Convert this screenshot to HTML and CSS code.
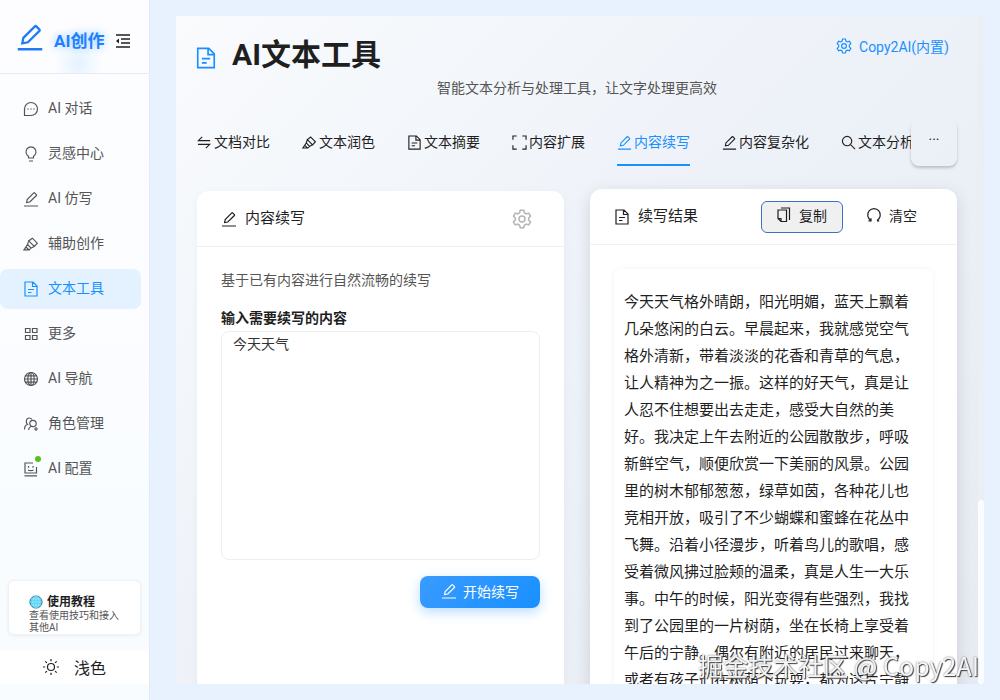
FILE: index.html
```html
<!DOCTYPE html>
<html lang="zh-CN">
<head>
    <meta charset="UTF-8">
    <meta name="viewport" content="width=device-width, initial-scale=1.0">
    <title>AI文本工具</title>
    <link rel="stylesheet" href="styles.css">
</head>
<body>
    <!-- Shared icons -->
    <svg class="sprite" aria-hidden="true">
        <symbol id="edit" viewBox="0 0 16 16"><path d="M1 15h14M3.6 11.6l.6-3.1 6.6-6.6a.6.6 0 0 1 .8 0l1.8 1.8a.6.6 0 0 1 0 .8L6.800 11z"/></symbol>
        <symbol id="file" viewBox="0 0 16 16"><path d="M2 1h8l4 4v10H2zM9.500 1v4.500H14M5 8.500h6M5 11.500h3.500"/></symbol>
        <symbol id="highlight" viewBox="0 0 16 16"><path d="M9.300 2.200l5 5-3 3.300-5.600-5.600zM5.700 4.900L4.500 8.500l3.600 3.600 3.200-1.600M4.500 8.500L1 13.800h5.200l1.900-1.700M3 11l3 3"/></symbol>
        <symbol id="gear" viewBox="0 0 16 16"><path d="M6.600 1h2.800l.5 2 1.500.9 2-.6 1.400 2.400L13.300 7.200v1.600l1.500 1.500-1.400 2.400-2-.6-1.500.9-.5 2H6.600l-.5-2-1.500-.9-2 .6-1.400-2.400 1.500-1.500V7.200L1.200 5.700l1.400-2.400 2 .6L6.100 3z"/><circle cx="8" cy="8" r="2.400"/></symbol>
    </svg>

    <div class="app">
        <aside class="sidebar">
            <div class="brand">
                <svg class="icon brand-logo"><use href="#edit"/></svg>
                <span class="brand-name">AI创作</span>
                <button class="fold-btn" aria-label="收起菜单">
                    <svg class="icon" viewBox="0 0 16 16"><path d="M1 2h14M6 6h9M6 10h9M1 14h14"/><path class="solid" d="M4 5.500v5L1 8z"/></svg>
                </button>
            </div>

            <nav class="menu">
                <a class="menu-item" href="#"><svg class="icon" viewBox="0 0 16 16"><path d="M1.500 14.500V8A6.500 6.500 0 1 1 8 14.500z"/><path d="M4.300 8h1.400M7.300 8h1.400M10.300 8h1.400"/></svg>AI 对话</a>
                <a class="menu-item" href="#"><svg class="icon" viewBox="0 0 16 16"><path d="M5.500 12V10.200a5 5 0 1 1 5 0V12zM6 15h4"/></svg>灵感中心</a>
                <a class="menu-item" href="#"><svg class="icon"><use href="#edit"/></svg>AI 仿写</a>
                <a class="menu-item" href="#"><svg class="icon"><use href="#highlight"/></svg>辅助创作</a>
                <a class="menu-item active" href="#"><svg class="icon"><use href="#file"/></svg>文本工具</a>
                <a class="menu-item" href="#"><svg class="icon" viewBox="0 0 16 16"><path d="M2.500 2.500h4.500v4h-4.500zM9.500 2.500h4.500v4h-4.500zM2.500 9.500h4.500v4h-4.500zM9.500 9.500h4.500v4h-4.500z"/></svg>更多</a>
                <a class="menu-item" href="#"><svg class="icon" viewBox="0 0 16 16"><circle cx="8" cy="8" r="6.500"/><ellipse cx="8" cy="8" rx="3.200" ry="6.500"/><path d="M8 1.500v13M1.500 8h13M2.500 4.800h11M2.500 11.200h11"/></svg>AI 导航</a>
                <a class="menu-item" href="#"><svg class="icon" viewBox="0 0 16 16"><path d="M1.500 13.500c0-3 1.200-4.500 3-5C2.500 6.500 3 2 6.200 2c1.500 0 2.300.7 2.800 1.500M5.500 14c.2-2 1-3 2.500-3.500M11 13h4M13 11v4"/><circle cx="10" cy="7.500" r="3.200"/></svg>角色管理</a>
                <a class="menu-item" href="#"><span class="icon-wrap"><svg class="icon" viewBox="0 0 16 16"><path d="M10 2H2v10h11.500V6M1.500 14.800h12.500M5.500 5v1.800M10 5v1.800M5 8.800c1 1.200 4.500 1.200 5.500 0"/></svg><i class="dot"></i></span>AI 配置</a>
            </nav>

            <a class="tutorial" href="#">
                <strong class="tutorial-title">
                    <svg class="globe" viewBox="0 0 16 16"><circle cx="8" cy="8" r="7"/><path d="M8 1v14M1 8h14M2.500 4.500h11M2.500 11.500h11"/><ellipse cx="8" cy="8" rx="3.500" ry="7"/></svg>使用教程
                </strong>
                <span class="tutorial-text">查看使用技巧和接入其他AI</span>
            </a>
            <button class="theme-btn">
                <svg class="icon" viewBox="0 0 16 16"><circle cx="8" cy="8" r="3.500"/><path d="M8 0v2.200M8 13.800V16M0 8h2.200M13.800 8H16M2.300 2.300l1.600 1.600M12.100 12.100l1.600 1.600M2.300 13.700l1.600-1.600M12.100 3.900l1.600-1.600"/></svg>浅色
            </button>
        </aside>

        <main class="main">
            <div class="panel">
                <header class="page-header">
                    <svg class="icon title-icon"><use href="#file"/></svg>
                    <h1>AI文本工具</h1>
                    <a class="model-link" href="#"><svg class="icon"><use href="#gear"/></svg>Copy2AI(内置)</a>
                </header>
                <p class="subtitle">智能文本分析与处理工具，让文字处理更高效</p>

                <div class="tabs">
                    <div class="tab-list" role="tablist">
                        <button class="tab" role="tab"><svg class="icon" viewBox="0 0 16 16"><path d="M14 6H1.500L5.500 2M1 10h12.500l-4 4"/></svg>文档对比</button>
                        <button class="tab" role="tab"><svg class="icon"><use href="#highlight"/></svg>文本润色</button>
                        <button class="tab" role="tab"><svg class="icon"><use href="#file"/></svg>文本摘要</button>
                        <button class="tab" role="tab"><svg class="icon" viewBox="0 0 16 16"><path d="M1 5V1h4M11 1h4v4M15 11v4h-4M5 15H1v-4"/></svg>内容扩展</button>
                        <button class="tab active" role="tab" aria-selected="true"><svg class="icon"><use href="#edit"/></svg>内容续写</button>
                        <button class="tab" role="tab"><svg class="icon"><use href="#edit"/></svg>内容复杂化</button>
                        <button class="tab" role="tab"><svg class="icon" viewBox="0 0 16 16"><circle cx="6.500" cy="6.500" r="5"/><path d="M10.200 10.200L15 15"/></svg>文本分析</button>
                    </div>
                    <button class="tab-more" aria-label="更多标签">···</button>
                </div>

                <div class="columns">
                    <section class="card">
                        <div class="card-header">
                            <svg class="icon"><use href="#edit"/></svg>
                            <h2>内容续写</h2>
                            <button class="settings-btn" aria-label="设置"><svg class="icon"><use href="#gear"/></svg></button>
                        </div>
                        <div class="card-body form-body">
                            <p class="desc">基于已有内容进行自然流畅的续写</p>
                            <label class="field-label" for="source">输入需要续写的内容</label>
                            <textarea class="source" id="source">今天天气</textarea>
                            <button class="primary-btn"><svg class="icon"><use href="#edit"/></svg>开始续写</button>
                        </div>
                    </section>

                    <section class="card raised">
                        <div class="card-header">
                            <svg class="icon"><use href="#file"/></svg>
                            <h2>续写结果</h2>
                            <div class="actions">
                                <button class="action-btn focused"><svg class="icon" viewBox="0 0 16 16"><path d="M2 3h8.500v11.500H5L2 11.500zM5 14.500v-3H2M5 1h8.500v12"/></svg>复制</button>
                                <button class="action-btn"><svg class="icon" viewBox="0 0 16 16"><path d="M5 13.500a6.300 6.300 0 1 1 6 0M2.500 13.800H5v-2.500M13.200 13.800H11"/></svg>清空</button>
                            </div>
                        </div>
                        <div class="card-body">
                            <div class="result">今天天气格外晴朗，阳光明媚，蓝天上飘着几朵悠闲的白云。早晨起来，我就感觉空气格外清新，带着淡淡的花香和青草的气息，让人精神为之一振。这样的好天气，真是让人忍不住想要出去走走，感受大自然的美好。我决定上午去附近的公园散散步，呼吸新鲜空气，顺便欣赏一下美丽的风景。公园里的树木郁郁葱葱，绿草如茵，各种花儿也竞相开放，吸引了不少蝴蝶和蜜蜂在花丛中飞舞。沿着小径漫步，听着鸟儿的歌唱，感受着微风拂过脸颊的温柔，真是人生一大乐事。中午的时候，阳光变得有些强烈，我找到了公园里的一片树荫，坐在长椅上享受着午后的宁静。偶尔有附近的居民过来聊天，或者有孩子们在树荫下玩耍，都为这片宁静</div>
                        </div>
                    </section>
                </div>
            </div>
            <div class="scroll-track"><div class="scroll-thumb"></div></div>
        </main>
    </div>
    <div class="watermark">掘金技术社区 @ Copy2AI</div>
</body>
</html>
```
FILE: styles.css
```css
* {
    margin: 0;
    padding: 0;
    box-sizing: border-box;
}

body {
    font-family: Roboto, "Noto Sans CJK SC", sans-serif;
    font-size: 14px;
    color: #1f1f1f;
    background: #e8f2fe;
}

button {
    font: inherit;
    color: inherit;
    background: none;
    border: none;
    cursor: pointer;
}

a {
    color: inherit;
    text-decoration: none;
}

.sprite {
    position: absolute;
    width: 0;
    height: 0;
}

.icon {
    width: 16px;
    height: 16px;
    flex-shrink: 0;
    fill: none;
    stroke: currentColor;
    stroke-width: 1.2;
}

.icon .solid {
    fill: currentColor;
    stroke: none;
}

.app {
    display: flex;
    height: 100vh;
    overflow: hidden;
}

/* Sidebar */
.sidebar {
    width: 150px;
    flex-shrink: 0;
    display: flex;
    flex-direction: column;
    padding-bottom: 16px;
    background: linear-gradient(180deg, #fdfdff, #f8fcff);
    border-right: 1px solid #e4ebf3;
}

.brand {
    display: flex;
    align-items: center;
    height: 74px;
    padding: 8px 16px 0;
    border-bottom: 1px solid #e4edf7;
    background: radial-gradient(circle at 78px 64px, #e4f2ff, transparent 24px);
}

.brand-logo {
    width: 28px;
    height: 28px;
    margin-bottom: 8px;
    color: #1e7bf5;
    stroke-width: 1.3;
}

.brand-name {
    margin-left: 10px;
    padding-bottom: 2px;
    font-size: 17px;
    font-weight: 700;
    color: #1e80ff;
    text-shadow: 0 0 10px #8cc8ff;
    white-space: nowrap;
}

.fold-btn {
    display: flex;
    margin-left: 11px;
}

.fold-btn .icon {
    stroke-width: 1.5;
}

.menu {
    display: flex;
    flex-direction: column;
    gap: 5px;
    padding: 15px 8px 0 0;
}

.menu-item {
    display: flex;
    align-items: center;
    gap: 9px;
    height: 40px;
    padding: 0 0 4px 23px;
    border-radius: 8px;
    color: #555;
}

.menu-item .icon {
    margin-top: 4px;
}

.menu-item.active {
    color: #1890ff;
    background: #e3f2fe;
}

.icon-wrap {
    position: relative;
    display: flex;
}

.dot {
    position: absolute;
    top: -1px;
    right: -2px;
    width: 6px;
    height: 6px;
    border-radius: 50%;
    background: #52c41a;
}

.tutorial {
    margin: auto 8px 16px;
    padding: 13px 20px 0;
    height: 55px;
    background: #fff;
    border: 1px solid #eef2f7;
    border-radius: 6px;
    box-shadow: 0 1px 4px rgba(0,0,0,0.06);
}

.tutorial-title {
    display: flex;
    align-items: center;
    gap: 4px;
    font-size: 12px;
    line-height: 16px;
}

.globe {
    width: 14px;
    height: 14px;
    fill: #4fd0f5;
    stroke: #17718f;
}

.globe path,
.globe ellipse {
    fill: none;
    stroke: #c5f2fc;
    stroke-width: 0.6;
}

.tutorial-text {
    display: block;
    font-size: 10px;
    line-height: 12px;
    color: #555;
}

.theme-btn {
    display: flex;
    align-items: center;
    justify-content: center;
    gap: 15px;
    height: 33px;
    padding-bottom: 2px;
    font-size: 16px;
    background: #fff;
}

/* Main panel */
.main {
    flex: 1;
    min-width: 0;
    display: flex;
    margin: 16px 16px 16px 26px;
    overflow: hidden;
}

.panel {
    flex: 1;
    min-width: 0;
    padding: 20px 21px 0;
    background: linear-gradient(135deg, #f9fbfd, #edf1f8 50%, #e6eaf1);
}

.scroll-track {
    display: flex;
    align-items: flex-end;
    background: #ebeff4;
}

.scroll-thumb {
    width: 6px;
    height: 184px;
    border-radius: 3px;
    background: #fafcff;
}

.page-header {
    display: flex;
    align-items: center;
    height: 40px;
}

.title-icon {
    width: 22px;
    height: 22px;
    margin: 4px 15px 0 -2px;
    color: #1890ff;
}

.page-header h1 {
    padding-bottom: 2px;
    font-size: 30px;
    line-height: 40px;
}

.model-link {
    display: flex;
    align-items: center;
    gap: 7px;
    margin: -20px 8px 0 auto;
    color: #1890ff;
}

.subtitle {
    margin-bottom: 20px;
    line-height: 24px;
    text-align: center;
    color: #555;
}

.tabs {
    display: flex;
    height: 46px;
    margin-bottom: 25px;
}

.tab-list {
    flex: 1;
    min-width: 0;
    display: flex;
    gap: 32px;
    overflow: hidden;
}

.tab {
    display: flex;
    flex-shrink: 0;
    align-items: center;
    gap: 2px;
    padding-bottom: 2px;
    border-bottom: 2px solid transparent;
}

.tab .icon {
    width: 15px;
    height: 15px;
    margin-top: 2px;
}

.tab.active {
    color: #1890ff;
    border-color: #1890ff;
}

.tab-more {
    width: 46px;
    padding-bottom: 6px;
    border-radius: 8px;
    box-shadow: 0 2px 3px rgba(0,0,0,0.2);
}

.columns {
    display: grid;
    grid-template-columns: 1fr 1fr;
    gap: 26px;
}

.card {
    min-width: 0;
    min-height: 520px;
    background: #fff;
    border-radius: 12px;
    box-shadow: 0 2px 8px rgba(0,0,0,0.04);
}

.card.raised {
    transform: translateY(-2px);
    box-shadow: 0 4px 16px rgba(0,0,0,0.12);
}

.card-header {
    display: flex;
    align-items: center;
    gap: 8px;
    height: 56px;
    padding: 0 24px;
    border-bottom: 1px solid #f0f0f0;
}

.card-header h2 {
    padding-bottom: 4px;
    font-size: 15px;
    font-weight: 400;
}

.settings-btn {
    display: flex;
    margin: 0 8px 0 auto;
    color: #b4b4b4;
}

.settings-btn .icon {
    width: 20px;
    height: 20px;
}

.actions {
    display: flex;
    gap: 8px;
    margin-left: auto;
}

.action-btn {
    display: flex;
    align-items: center;
    gap: 7px;
    height: 32px;
    padding: 0 15px 3px 14px;
    border: 1px solid transparent;
    border-radius: 6px;
}

.action-btn.focused {
    background: #f0f0f0;
    border-color: #3f6fc4;
}

.card-body {
    display: flex;
    flex-direction: column;
    padding: 24px;
}

.form-body {
    padding-top: 22px;
}

.desc {
    margin-bottom: 16px;
    line-height: 22px;
    color: #555;
}

.field-label {
    margin-bottom: 2px;
    line-height: 22px;
    font-weight: 700;
}

.source {
    width: 100%;
    height: 229px;
    padding: 1px 11px;
    font: inherit;
    line-height: 22px;
    color: #333;
    border: 1px solid #eee;
    border-radius: 8px;
    outline: none;
    resize: none;
}

.primary-btn {
    display: flex;
    align-items: center;
    align-self: flex-end;
    justify-content: center;
    gap: 6px;
    width: 120px;
    height: 32px;
    margin-top: 16px;
    padding-bottom: 3px;
    color: #fff;
    background: linear-gradient(135deg, #3a9bff, #1890ff);
    border-radius: 8px;
    box-shadow: 0 4px 12px rgba(24,144,255,0.3);
}

.result {
    padding: 20px 10px;
    font-size: 15px;
    line-height: 27px;
    border-radius: 8px;
    box-shadow: 0 0 6px rgba(0,0,0,0.05);
}

.watermark {
    position: fixed;
    right: 21px;
    bottom: 18px;
    font-family: "Noto Sans CJK SC", sans-serif;
    font-size: 25px;
    line-height: 34px;
    color: #f4f4f4;
    text-shadow: 1px 1px 1px #444, 0 0 2px #777;
}
```
